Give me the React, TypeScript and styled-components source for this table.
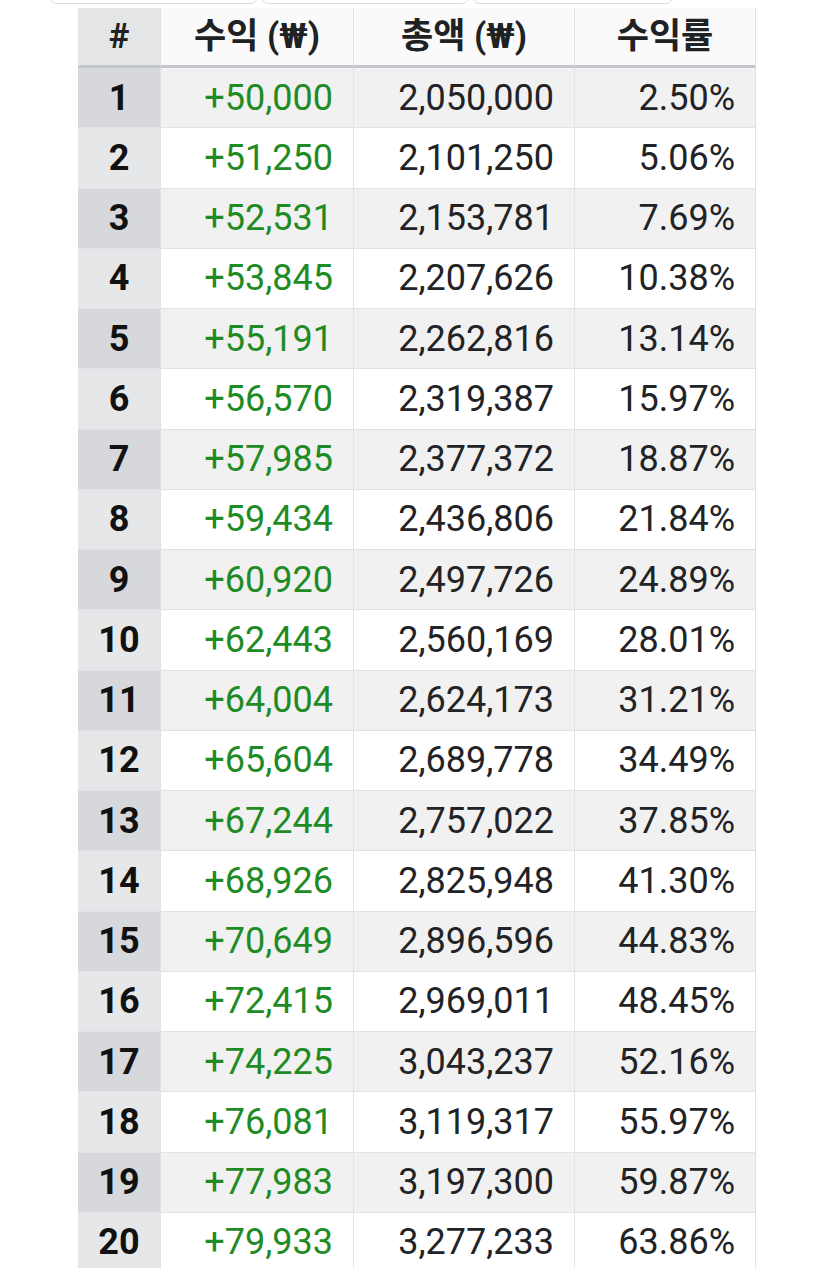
import React from "react";
import styled, { createGlobalStyle } from "styled-components";

const Global = createGlobalStyle`
  html, body { margin: 0; padding: 0; background: #ffffff; }
  body { font-family: Roboto, "Noto Sans CJK KR", "Noto Sans", sans-serif; color: #202122; }
`;

const Page = styled.div`
  width: 835px;
  height: 1268px;
  overflow: hidden;
  background: #ffffff;
`;

const Tabs = styled.div`
  display: flex;
  gap: 5px;
  padding-left: 50px;
  margin-top: -30px;
`;

const Tab = styled.div<{ $w: number }>`
  width: ${(p) => p.$w}px;
  height: 34px;
  box-sizing: border-box;
  border: 1px solid #dcdde0;
  border-radius: 6px;
  background: #ffffff;
`;

const TableWrap = styled.div`
  padding-left: 78px;
  margin-top: 4px;
`;

const Table = styled.table`
  border-collapse: separate;
  border-spacing: 0;
  table-layout: fixed;
  width: 678px;
`;

const HeadCell = styled.th<{ $num?: boolean }>`
  height: 60px;
  padding: 0;
  box-sizing: border-box;
  font-size: 35px;
  font-weight: 700;
  text-align: center;
  color: #202122;
  background: ${(p) => (p.$num ? "#e4e5e7" : "#fafafa")};
  border-right: 1px solid #e0e2e5;
  border-bottom: 3px solid #c4c7cb;
  line-height: 1;
`;

const Cell = styled.td<{ $odd: boolean; $kind: "num" | "gain" | "plain" }>`
  height: 60.26px;
  padding: 0 ${(p) => (p.$kind === "num" ? "0" : "20px")} 0 0;
  box-sizing: border-box;
  font-size: 36px;
  line-height: 1;
  font-weight: ${(p) => (p.$kind === "num" ? 700 : 400)};
  text-align: ${(p) => (p.$kind === "num" ? "center" : "right")};
  color: ${(p) => (p.$kind === "gain" ? "#1f8b24" : p.$kind === "num" ? "#111111" : "#222326")};
  background: ${(p) =>
    p.$kind === "num"
      ? p.$odd
        ? "#d6d8db"
        : "#e6e7e9"
      : p.$odd
      ? "#f1f1f1"
      : "#ffffff"};
  border-right: 1px solid #e0e2e5;
  border-bottom: 1px solid #e0e2e5;
`;

const rows: [string, string, string][] = [
  ["+50,000", "2,050,000", "2.50%"],
  ["+51,250", "2,101,250", "5.06%"],
  ["+52,531", "2,153,781", "7.69%"],
  ["+53,845", "2,207,626", "10.38%"],
  ["+55,191", "2,262,816", "13.14%"],
  ["+56,570", "2,319,387", "15.97%"],
  ["+57,985", "2,377,372", "18.87%"],
  ["+59,434", "2,436,806", "21.84%"],
  ["+60,920", "2,497,726", "24.89%"],
  ["+62,443", "2,560,169", "28.01%"],
  ["+64,004", "2,624,173", "31.21%"],
  ["+65,604", "2,689,778", "34.49%"],
  ["+67,244", "2,757,022", "37.85%"],
  ["+68,926", "2,825,948", "41.30%"],
  ["+70,649", "2,896,596", "44.83%"],
  ["+72,415", "2,969,011", "48.45%"],
  ["+74,225", "3,043,237", "52.16%"],
  ["+76,081", "3,119,317", "55.97%"],
  ["+77,983", "3,197,300", "59.87%"],
  ["+79,933", "3,277,233", "63.86%"],
];

export default function App() {
  return (
    <Page>
      <Global />
      <Tabs>
        <Tab $w={207} />
        <Tab $w={206} />
        <Tab $w={199} />
      </Tabs>
      <TableWrap>
        <Table>
          <colgroup>
            <col style={{ width: 83 }} />
            <col style={{ width: 193 }} />
            <col style={{ width: 221 }} />
            <col style={{ width: 181 }} />
          </colgroup>
          <thead>
            <tr>
              <HeadCell $num>#</HeadCell>
              <HeadCell>수익 (₩)</HeadCell>
              <HeadCell>총액 (₩)</HeadCell>
              <HeadCell>수익률</HeadCell>
            </tr>
          </thead>
          <tbody>
            {rows.map((r, i) => {
              const odd = i % 2 === 0;
              return (
                <tr key={i}>
                  <Cell $odd={odd} $kind="num">{i + 1}</Cell>
                  <Cell $odd={odd} $kind="gain">{r[0]}</Cell>
                  <Cell $odd={odd} $kind="plain">{r[1]}</Cell>
                  <Cell $odd={odd} $kind="plain">{r[2]}</Cell>
                </tr>
              );
            })}
          </tbody>
        </Table>
      </TableWrap>
    </Page>
  );
}
